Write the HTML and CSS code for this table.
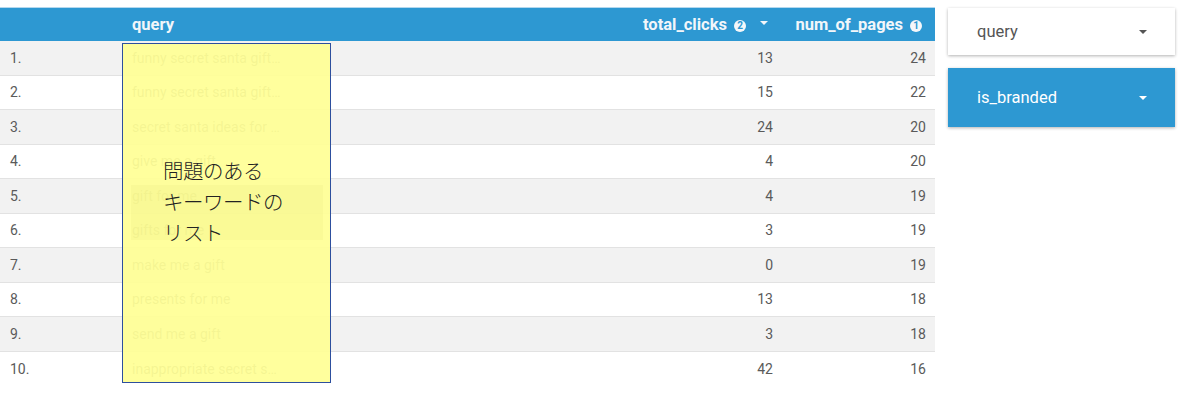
FILE: index.html
```html
<!DOCTYPE html>
<html>
<head>
<meta charset="utf-8">
<link rel="stylesheet" href="styles.css">
</head>
<body>
<div class="page">
  <div class="table-wrap">
    <div class="table">
      <div class="hd"></div>
      <div class="hd hd-left">query</div>
      <div class="hd hd-right">total_clicks <span class="badge">2</span><span class="sort"></span></div>
      <div class="hd hd-right hd-last">num_of_pages <span class="badge">1</span></div>

      <div class="c num odd">1.</div><div class="c q odd">funny secret santa gift…</div><div class="c v odd">13</div><div class="c v odd">24</div>
      <div class="c num">2.</div><div class="c q">funny secret santa gift…</div><div class="c v">15</div><div class="c v">22</div>
      <div class="c num odd">3.</div><div class="c q odd">secret santa ideas for …</div><div class="c v odd">24</div><div class="c v odd">20</div>
      <div class="c num">4.</div><div class="c q">give me a gift</div><div class="c v">4</div><div class="c v">20</div>
      <div class="c num odd">5.</div><div class="c q odd">gift for me</div><div class="c v odd">4</div><div class="c v odd">19</div>
      <div class="c num">6.</div><div class="c q">gifts for me</div><div class="c v">3</div><div class="c v">19</div>
      <div class="c num odd">7.</div><div class="c q odd">make me a gift</div><div class="c v odd">0</div><div class="c v odd">19</div>
      <div class="c num">8.</div><div class="c q">presents for me</div><div class="c v">13</div><div class="c v">18</div>
      <div class="c num odd">9.</div><div class="c q odd">send me a gift</div><div class="c v odd">3</div><div class="c v odd">18</div>
      <div class="c num last">10.</div><div class="c q last">inappropriate secret s…</div><div class="c v last">42</div><div class="c v last">16</div>
    </div>
    <div class="note">
      <div class="note-bg"></div>
      <div class="note-text">問題のある<br>キーワードの<br>リスト</div>
    </div>
  </div>
  <div class="side">
    <div class="dd dd-white"><span>query</span><span class="caret"></span></div>
    <div class="dd dd-blue"><span>is_branded</span><span class="caret"></span></div>
  </div>
</div>
</body>
</html>
```

FILE: styles.css
```css
html, body {
  margin: 0;
  padding: 0;
  background: #ffffff;
  font-family: Roboto, "Liberation Sans", sans-serif;
}
.page {
  display: flex;
  align-items: flex-start;
  padding-top: 8px;
  gap: 13px;
}
.table-wrap {
  position: relative;
  width: 935px;
}
.table {
  display: grid;
  grid-template-columns: 122px 1fr 168px 153px;
  grid-template-rows: 33px repeat(10, 34.5px);
}
.table .hd {
  background: #2d98d2;
  color: #f2f6fa;
  font-weight: 700;
  font-size: 16.5px;
  display: flex;
  align-items: center;
  box-shadow: 0 -1px 0 #b4d8ee;
}
.hd-left {
  padding-left: 10px;
}
.hd-right {
  justify-content: flex-end;
  padding-right: 14px;
}
.hd-last {
  padding-right: 13px;
}
.badge {
  display: inline-flex;
  align-items: center;
  justify-content: center;
  width: 12px;
  height: 12px;
  border-radius: 50%;
  background: #f4f7fa;
  color: #2d98d2;
  font-size: 10px;
  font-weight: 700;
  margin-left: 7px;
  margin-top: 2px;
}
.sort {
  width: 0;
  height: 0;
  border-left: 4px solid transparent;
  border-right: 4px solid transparent;
  border-top: 4.5px solid #f2f6fa;
  margin-left: 14px;
  margin-top: -3px;
}
.c {
  display: flex;
  align-items: center;
  font-size: 14px;
  color: #5a5a5a;
  border-bottom: 1px solid #e2e2e2;
  box-sizing: border-box;
  background: #ffffff;
}
.c.odd {
  background: #f2f2f2;
}
.c.last {
  border-bottom: none;
}
.num {
  padding-left: 10px;
}
.q {
  padding-left: 10px;
  color: #6a6a6a;
}
.v {
  justify-content: flex-end;
  padding-right: 9px;
}
.note {
  position: absolute;
  left: 122px;
  top: 35px;
  width: 207px;
  height: 338px;
  background: rgba(255, 255, 150, 0.93);
  border: 1px solid #2d4f9e;
}
.note-bg {
  position: absolute;
  left: 8px;
  top: 141px;
  width: 192px;
  height: 55px;
  background: rgba(235, 235, 130, 0.25);
}
.note-text {
  position: relative;
  margin: 111px 0 0 40px;
  font-family: "Noto Sans CJK JP", sans-serif;
  font-size: 20.5px;
  font-weight: 300;
  line-height: 31px;
  color: #222222;
  letter-spacing: -0.5px;
}
.side {
  display: flex;
  flex-direction: column;
  gap: 13px;
  width: 227px;
}
.dd {
  display: flex;
  align-items: center;
  justify-content: space-between;
  padding: 0 28px 0 29px;
  font-size: 16.5px;
  box-shadow: 0 1px 3px rgba(0, 0, 0, 0.3);
}
.dd-white {
  height: 47px;
  background: #ffffff;
  color: #555555;
}
.dd-blue {
  height: 59px;
  background: #2d98d2;
  color: #ffffff;
}
.caret {
  width: 0;
  height: 0;
  border-left: 4px solid transparent;
  border-right: 4px solid transparent;
  border-top: 4px solid #555555;
}
.dd-blue .caret {
  border-top-color: #ffffff;
}
```
